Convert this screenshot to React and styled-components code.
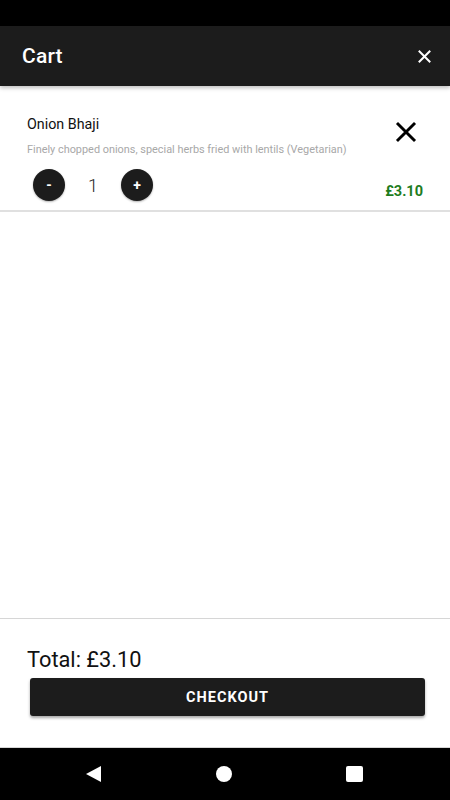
import styled, { createGlobalStyle } from "styled-components"

const GlobalStyle = createGlobalStyle`
    html, body { margin: 0; padding: 0; }
    body { font-family: Roboto, "Liberation Sans", sans-serif; background: #fff; }
`

const cart = [
    { id: 1, name: "Onion Bhaji", description: "Finely chopped onions, special herbs fried with lentils (Vegetarian)", qty: 1, price: 3.1 },
]

const CloseIcon = ({ size, stroke, color }) => (
    <svg width={size} height={size} viewBox="0 0 24 24">
        <path d="M4 4 L20 20 M20 4 L4 20" stroke={color} strokeWidth={stroke} strokeLinecap="square" fill="none" />
    </svg>
)

export default function App() {
    const total = cart.reduce((s, i) => s + i.qty * i.price, 0)
    return (
        <Screen>
            <GlobalStyle />
            <StatusBar />
            <Header>
                <Title>Cart</Title>
                <IconButton><CloseIcon size={15} stroke={3.2} color="#fff" /></IconButton>
            </Header>
            <List>
                {cart.map(item => (
                    <Item key={item.id}>
                        <ItemTop>
                            <ItemText>
                                <ItemName>{item.name}</ItemName>
                                <ItemDesc>{item.description}</ItemDesc>
                            </ItemText>
                            <RemoveButton><CloseIcon size={24} stroke={2.9} color="#000" /></RemoveButton>
                        </ItemTop>
                        <ItemBottom>
                            <Stepper>
                                <RoundButton>-</RoundButton>
                                <Qty>{item.qty}</Qty>
                                <RoundButton>+</RoundButton>
                            </Stepper>
                            <Price>£{(item.qty * item.price).toFixed(2)}</Price>
                        </ItemBottom>
                    </Item>
                ))}
            </List>
            <Footer>
                <Total>Total: £{total.toFixed(2)}</Total>
                <CheckoutButton>CHECKOUT</CheckoutButton>
            </Footer>
            <NavBar>
                <Triangle />
                <Dot />
                <Square />
            </NavBar>
        </Screen>
    )
}

const Screen = styled.div`
    width: 450px;
    height: 800px;
    display: flex;
    flex-direction: column;
    background: #fff;
    overflow: hidden;
`
const StatusBar = styled.div`
    height: 26px;
    background: #000;
    flex-shrink: 0;
`
const Header = styled.div`
    height: 60px;
    flex-shrink: 0;
    background: #1c1c1c;
    display: flex;
    align-items: center;
    justify-content: space-between;
    padding: 0 18px 0 22px;
    box-shadow: 0 2px 4px rgba(0, 0, 0, 0.25);
    position: relative;
    z-index: 1;
`
const Title = styled.h1`
    margin: 0;
    color: #fff;
    font-size: 21px;
    font-weight: 500;
    letter-spacing: 0.2px;
`
const IconButton = styled.button`
    background: none;
    border: none;
    padding: 0;
    display: flex;
    cursor: pointer;
`
const List = styled.div`
    flex: 1;
`
const Item = styled.div`
    padding: 29px 27px 9px 27px;
    border-bottom: 2px solid #e0e0e0;
`
const ItemTop = styled.div`
    display: flex;
    justify-content: space-between;
    align-items: flex-start;
`
const ItemText = styled.div`
    display: flex;
    flex-direction: column;
`
const ItemName = styled.div`
    font-size: 14.3px;
    color: #111;
    line-height: 18px;
`
const ItemDesc = styled.div`
    margin-top: 10px;
    font-size: 10.9px;
    color: #a8a8a8;
    line-height: 14px;
`
const RemoveButton = styled(IconButton)`
    margin-top: 5px;
    margin-right: 5px;
`
const ItemBottom = styled.div`
    display: flex;
    justify-content: space-between;
    align-items: flex-end;
    margin-top: 12px;
`
const Stepper = styled.div`
    display: flex;
    align-items: center;
    gap: 12px;
    padding-left: 6px;
`
const RoundButton = styled.button`
    width: 32px;
    height: 32px;
    border-radius: 50%;
    border: none;
    background: #1c1c1c;
    color: #fff;
    font-family: Roboto, sans-serif;
    font-size: 14px;
    font-weight: 700;
    display: flex;
    align-items: center;
    justify-content: center;
    padding: 0;
    box-shadow: 0 1px 2px rgba(0, 0, 0, 0.3);
`
const Qty = styled.span`
    width: 32px;
    text-align: center;
    font-size: 18px;
    color: #222;
    font-weight: 300;
`
const Price = styled.span`
    font-size: 14.5px;
    font-weight: 700;
    color: #1e7d1e;
    margin-bottom: 1px;
`
const Footer = styled.div`
    height: 130px;
    flex-shrink: 0;
    border-top: 1px solid #d6d6d6;
    border-bottom: 1px solid #d6d6d6;
    box-sizing: border-box;
    padding: 28px 25px 0 30px;
`
const Total = styled.div`
    font-size: 21.8px;
    color: #111;
    margin-left: -3px;
    line-height: 26px;
`
const CheckoutButton = styled.button`
    width: 100%;
    height: 38px;
    margin-top: 5px;
    background: #1c1c1c;
    border: none;
    border-radius: 3px;
    color: #fff;
    font-family: Roboto, sans-serif;
    font-size: 14.5px;
    font-weight: 700;
    letter-spacing: 1px;
    box-shadow: 0 2px 3px rgba(0, 0, 0, 0.35);
`
const NavBar = styled.div`
    height: 52px;
    flex-shrink: 0;
    background: #000;
    display: flex;
    align-items: center;
    justify-content: space-between;
    padding: 0 87px 0 86px;
`
const Triangle = styled.div`
    width: 0;
    height: 0;
    border-top: 8.5px solid transparent;
    border-bottom: 8.5px solid transparent;
    border-right: 15px solid #fff;
`
const Dot = styled.div`
    width: 16px;
    height: 16px;
    border-radius: 50%;
    background: #fff;
`
const Square = styled.div`
    width: 17px;
    height: 16px;
    border-radius: 2px;
    background: #fff;
`
